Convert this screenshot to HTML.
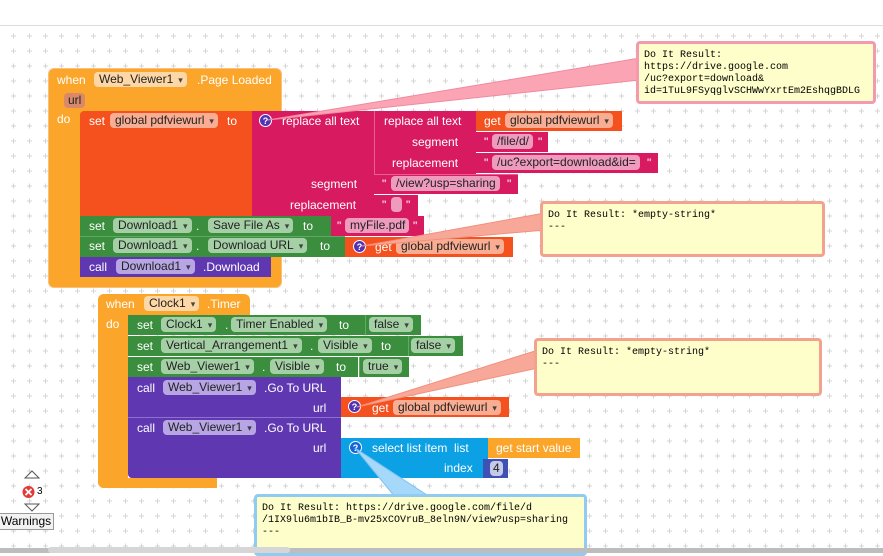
<!DOCTYPE html>
<html><head><meta charset="utf-8">
<style>
*{box-sizing:border-box;margin:0;padding:0}
body{width:883px;height:553px;overflow:hidden;background:#fff;font-family:"Liberation Sans",sans-serif;font-size:12px;position:relative}
.a{position:absolute}
.w{color:#fff;white-space:nowrap;line-height:14px}
.chip{position:absolute;border-radius:4px;color:#222;white-space:nowrap;line-height:15px;height:15px;padding:0 4px 0 5px;font-size:12px}
.dd::after{content:"▾";font-size:9px;margin-left:5px;opacity:.8}
.og{background:#fdd7a5}
.rd{background:#f9ad92}
.gr{background:#a5d0a6}
.pu{background:#b7a6e3}
.pk{background:#ee9bbe}
.q{position:absolute;width:13px;height:13px;border-radius:50%;color:#fff;font-size:9px;font-weight:bold;text-align:center;line-height:13px;border:1px solid #fff}
.bub{position:absolute;background:#fefecb;border-radius:4px;font-family:"Liberation Mono",monospace;font-size:10px;line-height:12px;color:#000;padding:6px 5px 0 5px;white-space:pre;overflow:hidden}
</style></head><body>
<svg class="a" style="left:0;top:0" width="883" height="553">
<defs><pattern id="g" width="16" height="15" patternUnits="userSpaceOnUse" x="6" y="3"><path d="M5 3h5M7.5 0.5v5" stroke="#d4d4d4" stroke-width="1"/></pattern></defs>
<rect x="0" y="26" width="883" height="527" fill="url(#g)"/>
<rect x="0" y="0" width="883" height="25" fill="#fff"/>
<line x1="0" y1="25.5" x2="883" y2="25.5" stroke="#ddd"/>
</svg>

<!-- Event 1 -->
<div class="a" style="left:48px;top:68px;width:234px;height:220px;background:#fba62a;border-radius:6px;border:1px solid #f8c07a"></div>
<div class="a w" style="left:57px;top:73px">when</div>
<div class="chip og dd" style="left:94px;top:72px">Web_Viewer1</div>
<div class="a w" style="left:197px;top:73px">.Page Loaded</div>
<div class="chip" style="left:64px;top:93px;background:#d9896a;padding:0 4px">url</div>
<div class="a w" style="left:57px;top:112px">do</div>

<div class="a" style="left:80px;top:111px;width:172px;height:105px;background:#f4511e;border-radius:4px 0 0 0"></div>
<div class="a w" style="left:89px;top:114px">set</div>
<div class="chip rd dd" style="left:110px;top:113px">global pdfviewurl</div>
<div class="a w" style="left:227px;top:114px">to</div>

<div class="a" style="left:252px;top:111px;width:122px;height:105px;background:#d81b60"></div>
<div class="q" style="left:259px;top:114px;background:#5333b5">?</div>
<div class="a w" style="left:282px;top:114px">replace all text</div>
<div class="a w" style="left:311px;top:177px">segment</div>
<div class="a w" style="left:290px;top:198px">replacement</div>
<div class="a" style="left:374px;top:111px;width:102px;height:63px;background:#d81b60;border-left:1px solid #e65f91"></div>
<div class="a w" style="left:384px;top:114px">replace all text</div>
<div class="a w" style="left:412px;top:135px">segment</div>
<div class="a w" style="left:392px;top:156px">replacement</div>
<div class="a" style="left:476px;top:111px;width:146px;height:20px;background:#f4511e"></div>
<div class="a w" style="left:484px;top:114px">get</div>
<div class="chip rd dd" style="left:505px;top:113px">global pdfviewurl</div>
<div class="a" style="left:476px;top:132px;width:72px;height:20px;background:#d81b60"></div>
<div class="a w" style="left:484px;top:135px">"</div>
<div class="chip pk" style="left:492px;top:134px">/file/d/</div>
<div class="a w" style="left:538px;top:135px">"</div>
<div class="a" style="left:476px;top:153px;width:182px;height:20px;background:#d81b60"></div>
<div class="a w" style="left:484px;top:156px">"</div>
<div class="chip pk" style="left:492px;top:155px">/uc?export=download&amp;id=</div>
<div class="a w" style="left:647px;top:156px">"</div>
<div class="a" style="left:374px;top:174px;width:144px;height:20px;background:#d81b60;border-top:1px solid #e65f91"></div>
<div class="a w" style="left:382px;top:177px">"</div>
<div class="chip pk" style="left:391px;top:176px">/view?usp=sharing</div>
<div class="a w" style="left:507px;top:177px">"</div>
<div class="a" style="left:374px;top:195px;width:44px;height:21px;background:#d81b60"></div>
<div class="a w" style="left:382px;top:198px">"</div>
<div class="chip pk" style="left:391px;top:197px;width:11px;padding:0"></div>
<div class="a w" style="left:406px;top:198px">"</div>

<div class="a" style="left:80px;top:216px;width:251px;height:20px;background:#3b8e3e"></div>
<div class="a w" style="left:89px;top:219px">set</div>
<div class="chip gr dd" style="left:113px;top:218px">Download1</div>
<div class="a w" style="left:196px;top:219px">.</div>
<div class="chip gr dd" style="left:208px;top:218px">Save File As</div>
<div class="a w" style="left:303px;top:219px">to</div>
<div class="a" style="left:331px;top:216px;width:93px;height:20px;background:#d81b60"></div>
<div class="a w" style="left:337px;top:219px">"</div>
<div class="chip pk" style="left:345px;top:218px">myFile.pdf</div>
<div class="a w" style="left:413px;top:219px">"</div>
<div class="a" style="left:80px;top:236px;width:265px;height:21px;background:#3b8e3e;border-top:1px solid #62a965"></div>
<div class="a w" style="left:89px;top:239px">set</div>
<div class="chip gr dd" style="left:113px;top:238px">Download1</div>
<div class="a w" style="left:196px;top:239px">.</div>
<div class="chip gr dd" style="left:208px;top:238px">Download URL</div>
<div class="a w" style="left:320px;top:239px">to</div>
<div class="a" style="left:345px;top:237px;width:168px;height:20px;background:#f4511e"></div>
<div class="q" style="left:353px;top:240px;background:#5333b5">?</div>
<div class="a w" style="left:375px;top:240px">get</div>
<div class="chip rd dd" style="left:396px;top:239px">global pdfviewurl</div>
<div class="a" style="left:80px;top:257px;width:191px;height:20px;background:#5e37b1"></div>
<div class="a w" style="left:89px;top:260px">call</div>
<div class="chip pu dd" style="left:116px;top:259px">Download1</div>
<div class="a w" style="left:203px;top:260px">.Download</div>

<!-- Event 2 -->
<div class="a" style="left:98px;top:294px;width:152px;height:22px;background:#fba62a;border-radius:6px 6px 0 0"></div>
<div class="a" style="left:98px;top:294px;width:30px;height:194px;background:#fba62a;border-radius:6px 0 0 6px"></div>
<div class="a" style="left:98px;top:478px;width:119px;height:10px;background:#fba62a;border-radius:0 0 0 6px"></div>
<div class="a w" style="left:106px;top:297px">when</div>
<div class="chip og dd" style="left:144px;top:296px">Clock1</div>
<div class="a w" style="left:207px;top:297px">.Timer</div>
<div class="a w" style="left:106px;top:317px">do</div>

<div class="a" style="left:128px;top:315px;width:240px;height:20px;background:#3b8e3e"></div>
<div class="a w" style="left:137px;top:318px">set</div>
<div class="chip gr dd" style="left:161px;top:317px">Clock1</div>
<div class="a w" style="left:225px;top:318px">.</div>
<div class="chip gr dd" style="left:231px;top:317px">Timer Enabled</div>
<div class="a w" style="left:339px;top:318px">to</div>
<div class="a" style="left:365px;top:315px;width:56px;height:20px;background:#3b8e3e;border-left:1px solid #62a965"></div>
<div class="chip gr dd" style="left:369px;top:317px">false</div>
<div class="a" style="left:128px;top:336px;width:281px;height:20px;background:#3b8e3e"></div>
<div class="a w" style="left:137px;top:339px">set</div>
<div class="chip gr dd" style="left:161px;top:338px">Vertical_Arrangement1</div>
<div class="a w" style="left:310px;top:339px">.</div>
<div class="chip gr dd" style="left:318px;top:338px">Visible</div>
<div class="a w" style="left:381px;top:339px">to</div>
<div class="a" style="left:408px;top:336px;width:55px;height:20px;background:#3b8e3e;border-left:1px solid #62a965"></div>
<div class="chip gr dd" style="left:411px;top:338px">false</div>
<div class="a" style="left:128px;top:357px;width:230px;height:20px;background:#3b8e3e"></div>
<div class="a w" style="left:137px;top:360px">set</div>
<div class="chip gr dd" style="left:161px;top:359px">Web_Viewer1</div>
<div class="a w" style="left:262px;top:360px">.</div>
<div class="chip gr dd" style="left:270px;top:359px">Visible</div>
<div class="a w" style="left:336px;top:360px">to</div>
<div class="a" style="left:359px;top:357px;width:50px;height:20px;background:#3b8e3e;border-left:1px solid #62a965"></div>
<div class="chip gr dd" style="left:363px;top:359px">true</div>

<div class="a" style="left:128px;top:377px;width:213px;height:101px;background:#5e37b1;border-radius:0 0 0 4px"></div>
<div class="a" style="left:128px;top:417px;width:213px;height:1px;background:#8d70cf"></div>
<div class="a w" style="left:137px;top:381px">call</div>
<div class="chip pu dd" style="left:163px;top:380px">Web_Viewer1</div>
<div class="a w" style="left:264px;top:381px">.Go To URL</div>
<div class="a w" style="left:313px;top:401px">url</div>
<div class="a w" style="left:137px;top:421px">call</div>
<div class="chip pu dd" style="left:163px;top:420px">Web_Viewer1</div>
<div class="a w" style="left:264px;top:421px">.Go To URL</div>
<div class="a w" style="left:313px;top:441px">url</div>
<div class="a" style="left:341px;top:397px;width:168px;height:20px;background:#f4511e"></div>
<div class="q" style="left:348px;top:400px;background:#5333b5">?</div>
<div class="a w" style="left:372px;top:401px">get</div>
<div class="chip rd dd" style="left:393px;top:400px">global pdfviewurl</div>
<div class="a" style="left:341px;top:438px;width:147px;height:40px;background:#0ca0e4"></div>
<div class="q" style="left:349px;top:441px;background:#1565d8">?</div>
<div class="a w" style="left:372px;top:441px">select list item &nbsp;list</div>
<div class="a w" style="left:444px;top:461px">index</div>
<div class="a" style="left:488px;top:438px;width:92px;height:20px;background:#fba62a"></div>
<div class="a w" style="left:496px;top:441px">get start value</div>
<div class="a" style="left:483px;top:459px;width:25px;height:19px;background:#3f51b5"></div>
<div class="chip" style="left:490px;top:461px;background:#c5cae9;padding:0 3px">4</div>

<!-- tails -->
<svg class="a" style="left:0;top:0" width="883" height="553">
<polygon points="268,120 640,58 640,80" fill="#fba4b4" stroke="#f08aa0"/>
<polygon points="362,246 545,213 545,230" fill="#f8a898" stroke="#f2907c"/>
<polygon points="357,407 538,350 538,368" fill="#f8a898" stroke="#f2907c"/>
<polygon points="355,448 395,497 430,497" fill="#a6d8fa" stroke="#7cc3f0"/>
</svg>

<div class="bub" style="left:636px;top:41px;width:240px;height:63px;border:3px solid #f39ab0">Do It Result:
https://drive.google.com
/uc?export=download&amp;
id=1TuL9FSyqglvSCHWwYxrtEm2EshqgBDLG
---</div>
<div class="bub" style="left:540px;top:201px;width:285px;height:56px;border:3px solid #f4a290">Do It Result: *empty-string*
---</div>
<div class="bub" style="left:534px;top:338px;width:288px;height:58px;border:3px solid #f4a290">Do It Result: *empty-string*
---</div>
<div class="bub" style="left:254px;top:494px;width:333px;height:62px;border:3px solid #8fcbf3">Do It Result: https://drive.google.com/file/d
/1IX9lu6m1bIB_B-mv25xCOVruB_8eln9N/view?usp=sharing
---</div>

<!-- warnings -->
<svg class="a" style="left:20px;top:470px" width="30" height="45">
<polygon points="12,1 5,8 19,8" fill="#fff" stroke="#555"/>
<circle cx="8.5" cy="22" r="6" fill="#e53935"/>
<path d="M5.5 19l6 6M11.5 19l-6 6" stroke="#fff" stroke-width="1.8"/>
<polygon points="5,34 19,34 12,41" fill="#fff" stroke="#555"/>
</svg>
<div class="a" style="left:37px;top:486px;font-size:10px">3</div>
<div class="a" style="left:-2px;top:513px;width:56px;height:17px;border:1px solid #999;background:#f2f2f2;font-size:12px;line-height:15px;text-align:center">Warnings</div>

<div class="a" style="left:0;top:548px;width:883px;height:5px;background:#bdbdbd"></div>
<div class="a" style="left:48px;top:547px;width:242px;height:6px;background:#d6d6d6;border-radius:3px"></div>
</body></html>
